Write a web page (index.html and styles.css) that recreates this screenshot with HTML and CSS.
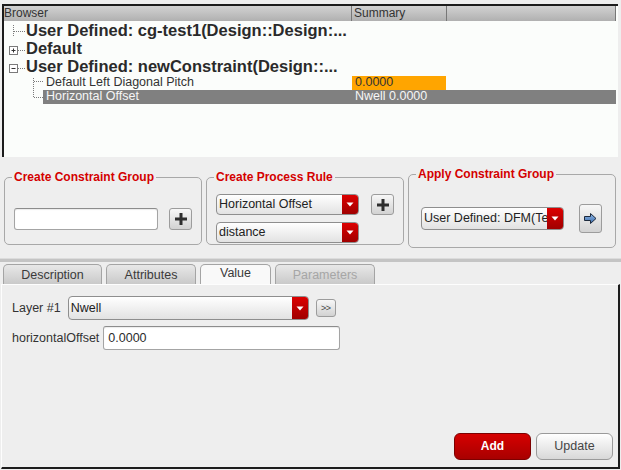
FILE: index.html
```html
<!DOCTYPE html>
<html>
<head>
<meta charset="utf-8">
<link rel="stylesheet" href="styles.css">
</head>
<body>
<div class="browser">
  <div class="bhead">
    <div class="hc hc1">Browser</div>
    <div class="hc hc2">Summary</div>
    <div class="hc hc3"></div>
  </div>
  <div class="tree">
    <div class="row big">
      <svg class="conn" width="22" height="18" viewBox="0 0 22 18"><path d="M9.5 4V15M10 10.5H21" stroke="#7a7a7a" stroke-dasharray="1 1" fill="none"/></svg>
      <span>User Defined: cg-test1(Design::Design:...</span>
    </div>
    <div class="row big">
      <svg class="conn" width="22" height="18" viewBox="0 0 22 18"><rect x="5.5" y="7.5" width="8" height="8" fill="#fff" stroke="#7a7a7a"/><path d="M7.5 11.5H11.5M9.5 9.5V13.5" stroke="#333" fill="none"/><path d="M14 11.5H21" stroke="#7a7a7a" stroke-dasharray="1 1" fill="none"/></svg>
      <span>Default</span>
    </div>
    <div class="row big last">
      <svg class="conn" width="22" height="19" viewBox="0 0 22 19"><rect x="5.5" y="7.5" width="8" height="8" fill="#fff" stroke="#7a7a7a"/><path d="M7.5 11.5H11.5" stroke="#333" fill="none"/><path d="M14 11.5H21" stroke="#7a7a7a" stroke-dasharray="1 1" fill="none"/></svg>
      <span>User Defined: newConstraint(Design::...</span>
    </div>
    <div class="row small">
      <svg class="kconn" width="39" height="14" viewBox="0 0 39 14"><path d="M29.5 2V14M30 5.5H39" stroke="#7a7a7a" stroke-dasharray="1 1" fill="none"/></svg>
      <div class="kname">Default Left Diagonal Pitch</div>
      <div class="ksum orange">0.0000</div>
      <div class="kfill"></div>
    </div>
    <div class="row small sel">
      <svg class="kconn" width="39" height="14" viewBox="0 0 39 14"><path d="M29.5 0V7.5M30 7.5H39" stroke="#7a7a7a" stroke-dasharray="1 1" fill="none"/></svg>
      <div class="kname">Horizontal Offset</div>
      <div class="ksum">Nwell 0.0000</div>
      <div class="kfill"></div>
    </div>
  </div>
</div>

<div class="groups">
  <div class="grp g1">
    <div class="gtitle">Create Constraint Group</div>
    <div class="gbody b1">
      <div class="field f1"></div>
      <div class="btn plus"><svg width="12" height="12" viewBox="0 0 12 12"><path d="M4.5 0H7.5V4.5H12V7.5H7.5V12H4.5V7.5H0V4.5H4.5Z" fill="#2e2e2e"/></svg></div>
    </div>
  </div>
  <div class="grp g2">
    <div class="gtitle">Create Process Rule</div>
    <div class="gbody b2">
      <div class="col">
        <div class="combo c143"><span class="ctext">Horizontal Offset</span><span class="carrow"><svg width="8" height="5" viewBox="0 0 8 5"><path d="M0.5 0.5H7.5L4 4.5Z" fill="#fff"/></svg></span></div>
        <div class="combo c143"><span class="ctext">distance</span><span class="carrow"><svg width="8" height="5" viewBox="0 0 8 5"><path d="M0.5 0.5H7.5L4 4.5Z" fill="#fff"/></svg></span></div>
      </div>
      <div class="btn plus p2"><svg width="12" height="12" viewBox="0 0 12 12"><path d="M4.5 0H7.5V4.5H12V7.5H7.5V12H4.5V7.5H0V4.5H4.5Z" fill="#2e2e2e"/></svg></div>
    </div>
  </div>
  <div class="grp g3">
    <div class="gtitle">Apply Constraint Group</div>
    <div class="gbody b3">
      <div class="combo c3"><span class="ctext">User Defined: DFM(Te</span><span class="carrow"><svg width="8" height="5" viewBox="0 0 8 5"><path d="M0.5 0.5H7.5L4 4.5Z" fill="#fff"/></svg></span></div>
      <div class="btn arrowbtn"><svg width="13" height="11" viewBox="0 0 13 11"><defs><linearGradient id="ag" x1="0" y1="0" x2="0" y2="1"><stop offset="0" stop-color="#8fb6e6"/><stop offset="1" stop-color="#3d6fae"/></linearGradient></defs><path d="M0.5 3.5H6.5V0.5L12 5.5L6.5 10.5V7.5H0.5Z" fill="url(#ag)" stroke="#1d2a3c"/></svg></div>
    </div>
  </div>
</div>

<div class="splitter"></div>

<div class="tabs">
  <div class="tab t1">Description</div>
  <div class="tab t2">Attributes</div>
  <div class="tab t3 active">Value</div>
  <div class="tab t4 disabled">Parameters</div>
</div>
<div class="panel">
  <div class="prow">
    <span class="lbl l1">Layer #1</span>
    <div class="combo c241"><span class="ctext">Nwell</span><span class="carrow"><svg width="8" height="5" viewBox="0 0 8 5"><path d="M0.5 0.5H7.5L4 4.5Z" fill="#fff"/></svg></span></div>
    <div class="btn more">&gt;&gt;</div>
  </div>
  <div class="prow r2">
    <span class="lbl l2">horizontalOffset</span>
    <div class="field f2">0.0000</div>
  </div>
  <div class="actions">
    <div class="abtn add">Add</div>
    <div class="abtn upd">Update</div>
  </div>
</div>
</body>
</html>
```
FILE: styles.css
```css
* { box-sizing: border-box; }
html, body { margin: 0; padding: 0; }
body {
  width: 621px;
  height: 470px;
  overflow: hidden;
  background: #eeeeee;
  font-family: "Liberation Sans", Arial, sans-serif;
  font-size: 12.5px;
  color: #2b2b2b;
}

/* ---------- browser ---------- */
.browser {
  margin: 4px 3px 0 2px;
  height: 153px;
  border-top: 2px solid #1c1c1c;
  border-left: 2px solid #1c1c1c;
  background: #fbfdfb;
}
.bhead {
  display: flex;
  height: 15px;
  font-size: 12px;
  line-height: 15px;
  color: #333;
}
.hc {
  height: 15px;
  background: linear-gradient(#d2d2d2, #b0b0b0);
  border-right: 1px solid #777;
}
.hc1 { width: 348px; padding-left: 0; }
.hc2 { width: 95px; padding-left: 2px; }
.hc3 { width: 169px; }

.row { display: flex; white-space: nowrap; }
.row.big {
  height: 18px;
  font-weight: bold;
  font-size: 16.5px;
  line-height: 18px;
  color: #2a2a2a;
}
.row.big.last { height: 19px; }
.conn { flex: none; display: block; }
.row.small {
  height: 14px;
  font-size: 12.5px;
  line-height: 12px;
  color: #333;
}
.kconn { flex: none; display: block; }
.kname { width: 309px; padding-left: 3px; }
.ksum { width: 94px; padding-left: 3px; }
.kfill { width: 170px; }
.orange { background: #ffa500; }
.sel .kname, .sel .ksum, .sel .kfill { background: #808080; color: #f6f6f6; }

/* ---------- groups ---------- */
.groups {
  display: flex;
  align-items: center;
  gap: 4px;
  margin-top: 17px;
  padding-left: 4px;
  height: 74px;
}
.grp {
  border: 1px solid #a8a8a8;
  border-radius: 5px;
}
.g1, .g2 { width: 198px; height: 68px; }
.g3 { width: 208px; height: 74px; }
.gtitle {
  width: fit-content;
  margin: -8px 0 0 7px;
  padding: 0 2px;
  background: #eeeeee;
  color: #d40000;
  font-weight: bold;
  font-size: 12px;
  line-height: 14px;
}
.gbody { display: flex; }
.b1 { margin-top: 24px; padding-left: 9px; align-items: center; }
.b2 { margin-top: 10px; padding-left: 9px; align-items: flex-start; }
.b3 { margin-top: 23px; padding-left: 12px; align-items: center; }
.col { display: flex; flex-direction: column; gap: 7px; }

.field {
  background: #ffffff;
  border: 1px solid #a4a4a4;
  border-top-color: #8c8c8c;
  border-radius: 3px;
  box-shadow: inset 0 1px 1px rgba(0,0,0,0.08);
}
.f1 { width: 144px; height: 22px; }
.f2 {
  width: 237px;
  height: 24px;
  padding-left: 4px;
  line-height: 22px;
  color: #2b2b2b;
}

.btn {
  display: flex;
  align-items: center;
  justify-content: center;
  background: linear-gradient(#f7f7f7, #d2d2d2);
  border: 1px solid #9c9c9c;
  border-radius: 3px;
}
.plus { width: 23px; height: 22px; margin-left: 11px; }
.p2 { height: 21px; margin-left: 12px; }
.arrowbtn { width: 23px; height: 29px; margin-left: 15px; }
.more {
  width: 20px;
  height: 18px;
  margin-left: 7px;
  font-size: 9px;
  color: #444;
  letter-spacing: -0.5px;
}

.combo {
  display: flex;
  background: linear-gradient(#ffffff, #e2e2e2);
  border: 1px solid #8e8e8e;
  border-radius: 4px;
  overflow: hidden;
  white-space: nowrap;
  color: #222;
}
.c143 { width: 143px; height: 21px; line-height: 19px; }
.c3 { width: 143px; height: 23px; line-height: 21px; }
.c241 { width: 241px; height: 24px; line-height: 22px; }
.ctext { flex: 1; overflow: hidden; padding-left: 2px; }
.carrow {
  flex: none;
  width: 16px;
  display: flex;
  align-items: center;
  justify-content: center;
  background: linear-gradient(#dc0000, #a00000);
}

/* ---------- splitter ---------- */
.splitter {
  margin-top: 10px;
  height: 4px;
  border-top: 1px solid #dcdcdc;
  background: #c4c4c4;
}

/* ---------- tabs ---------- */
.tabs {
  display: flex;
  margin-top: 2px;
  padding-left: 3px;
  height: 20px;
}
.tab {
  height: 20px;
  border: 1px solid #a4a4a4;
  border-bottom: none;
  border-radius: 5px 5px 0 0;
  background: linear-gradient(#e8e8e8, #c9c9c9);
  text-align: center;
  line-height: 20px;
  color: #3a3a3a;
}
.t1 { width: 99px; }
.t2 { width: 90px; margin-left: 4px; }
.t3 { width: 71px; margin-left: 4px; }
.t4 { width: 100px; margin-left: 4px; }
.tab.active { background: #f9f9f9; line-height: 17px; }
.tab.disabled { color: #a6a6a6; }

/* ---------- panel ---------- */
.panel {
  margin-left: 1px;
  width: 619px;
  height: 185px;
  border-top: 1px solid #fdfdfd;
  border-left: 1px solid #fdfdfd;
  border-right: 2px solid #1c1c1c;
  border-bottom: 2px solid #1c1c1c;
  padding: 11px 5px 7px 10px;
  display: flex;
  flex-direction: column;
}
.prow { display: flex; align-items: center; }
.r2 { margin-top: 6px; }
.lbl { color: #333; }
.l1 { margin-right: 7px; }
.l2 { margin-right: 4px; }

.actions {
  margin-top: auto;
  display: flex;
  justify-content: flex-end;
  gap: 5px;
}
.abtn {
  width: 77px;
  height: 27px;
  border-radius: 6px;
  text-align: center;
  line-height: 25px;
}
.add {
  background: linear-gradient(#d60000, #a80000);
  border: 1px solid #7c0000;
  color: #ffffff;
  font-weight: bold;
  font-size: 12px;
}
.upd {
  background: linear-gradient(#ffffff, #d8d8d8);
  border: 1px solid #9a9a9a;
  color: #444;
}
```
